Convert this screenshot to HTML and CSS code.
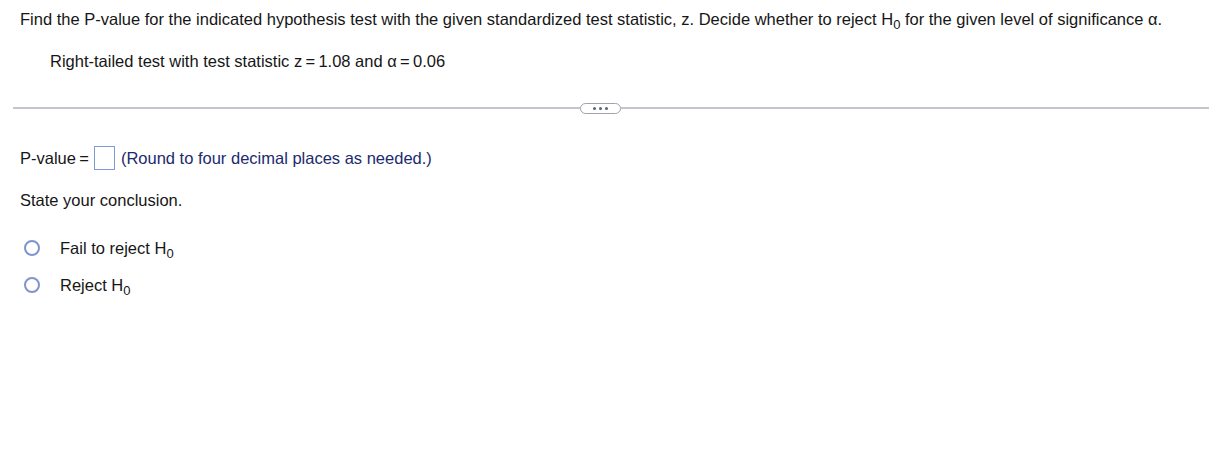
FILE: index.html
```html
<!DOCTYPE html>
<html>
<head>
<meta charset="utf-8">
<link rel="stylesheet" href="styles.css">
</head>
<body>
<div class="question">
  <p class="prompt">Find the P-value for the indicated hypothesis test with the given standardized test statistic, z. Decide whether to reject H<sub>0</sub> for the given level of significance &alpha;.</p>
  <p class="given">Right-tailed test with test statistic z&#8201;=&#8201;1.08 and &alpha;&#8201;=&#8201;0.06</p>
</div>
<div class="divider">
  <div class="line"></div>
  <div class="more"><span></span><span></span><span></span></div>
  <div class="line"></div>
</div>
<div class="answer">
  <div class="pvalue">
    <span>P-value&#8201;=</span>
    <span class="box"></span>
    <span class="hint">(Round to four decimal places as needed.)</span>
  </div>
  <p class="state">State your conclusion.</p>
  <ul class="options">
    <li><span class="radio"></span><span>Fail to reject H<sub>0</sub></span></li>
    <li><span class="radio"></span><span>Reject H<sub>0</sub></span></li>
  </ul>
</div>
</body>
</html>
```

FILE: styles.css
```css
html, body {
  margin: 0;
  padding: 0;
  background: #ffffff;
}
body {
  font-family: "Liberation Sans", Arial, sans-serif;
  font-size: 16.5px;
  color: #161616;
}
p { margin: 0; }
sub {
  font-size: 13px;
  vertical-align: -4px;
  line-height: 0;
}
.question {
  padding: 10px 0 0 20px;
}
.prompt {
  line-height: 19px;
}
.given {
  margin: 23px 0 0 30px;
  line-height: 19px;
}
.divider {
  display: flex;
  align-items: center;
  margin: 31px 0 0 13px;
  height: 12px;
}
.line {
  flex: 1;
  height: 2px;
  background: #c3c6cd;
}
.divider .line:first-child {
  flex: 0 0 567px;
}
.more {
  width: 39px;
  height: 9px;
  border: 1.5px solid #9ea4ae;
  border-radius: 6px;
  display: flex;
  align-items: center;
  justify-content: center;
  gap: 3px;
  background: #fff;
}
.more span {
  width: 3px;
  height: 3px;
  border-radius: 50%;
  background: #5a6478;
}
.answer {
  padding: 32px 0 0 20px;
}
.pvalue {
  display: flex;
  align-items: center;
  height: 24px;
}
.box {
  width: 19px;
  height: 22px;
  border: 1px solid #7f9bd1;
  margin: 0 6px 0 5px;
  background: #fff;
}
.hint {
  color: #1c2a6e;
}
.state {
  margin-top: 21px;
  line-height: 19px;
}
.options {
  list-style: none;
  margin: 28px 0 0 0;
  padding: 0;
}
.options li {
  display: flex;
  align-items: center;
  height: 20px;
  margin-bottom: 17px;
}
.radio {
  width: 12px;
  height: 12px;
  border: 2px solid #8193cd;
  border-radius: 50%;
  margin: 0 20px 0 4px;
  box-sizing: content-box;
}
```
